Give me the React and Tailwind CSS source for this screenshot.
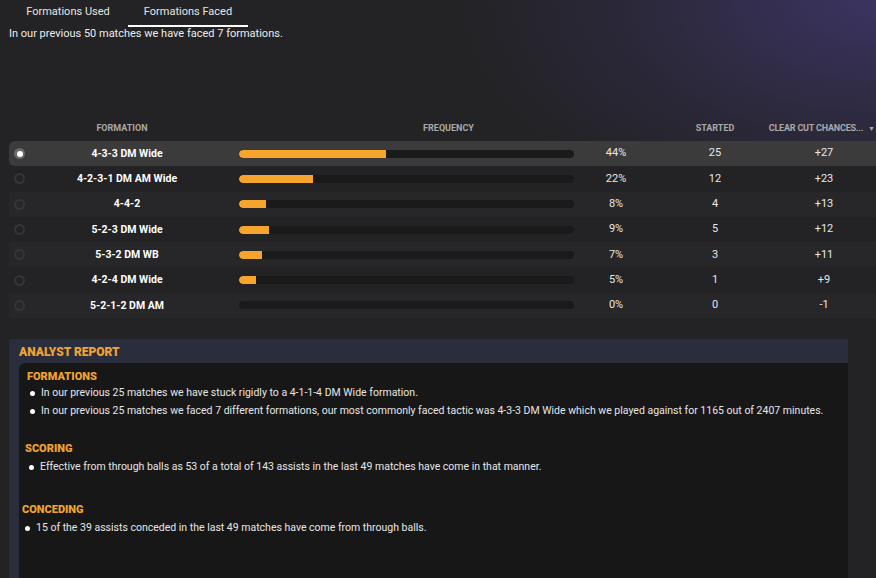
import React from "react";

const rows = [
  { name: "4-3-3 DM Wide", pct: 44, started: 25, ccc: "+27", sel: true },
  { name: "4-2-3-1 DM AM Wide", pct: 22, started: 12, ccc: "+23" },
  { name: "4-4-2", pct: 8, started: 4, ccc: "+13" },
  { name: "5-2-3 DM Wide", pct: 9, started: 5, ccc: "+12" },
  { name: "5-3-2 DM WB", pct: 7, started: 3, ccc: "+11" },
  { name: "4-2-4 DM Wide", pct: 5, started: 1, ccc: "+9" },
  { name: "5-2-1-2 DM AM", pct: 0, started: 0, ccc: "-1" },
];

function Row({ r, i }) {
  const bg = r.sel
    ? "bg-[#3c3b3c] rounded-l-md"
    : i % 2 === 1
    ? "bg-[#232224]"
    : "bg-[#272628]";
  return (
    <div className={`flex items-center h-[25.3px] ${bg}`}>
      <div className="w-[21px] flex justify-center">
        {r.sel ? (
          <div className="w-[11px] h-[11px] rounded-full bg-[#6a6a6a] flex items-center justify-center">
            <div className="w-[6px] h-[6px] rounded-full bg-white" />
          </div>
        ) : (
          <div className="w-[11px] h-[11px] rounded-full border-2 border-[#363537]" />
        )}
      </div>
      <div className="w-[184px] pl-[10px] text-center font-bold text-white text-[10.5px] whitespace-nowrap">{r.name}</div>
      <div className="w-[25px]" />
      <div className="w-[335px] h-[8px] rounded-full bg-[#1b1a1b] overflow-hidden">
        <div
          className="h-full bg-[#f6a52c] rounded-l-full"
          style={{ width: `${r.pct}%` }}
        />
      </div>
      <div className="w-[84px] text-center text-[11px] text-[#e8e8e8]">{r.pct}%</div>
      <div className="w-[114px] text-center text-[11px] text-[#e8e8e8]">{r.started}</div>
      <div className="w-[104px] text-center text-[11px] text-[#e8e8e8]">{r.ccc}</div>
    </div>
  );
}

function Bullet({ children, ml }) {
  return (
    <div className={`flex items-center h-[18px] ${ml}`}>
      <div className="w-[5px] h-[5px] rounded-full bg-white mr-[6px] shrink-0" />
      <span className="text-[10.5px] text-[#e6e6e6] whitespace-nowrap">{children}</span>
    </div>
  );
}

export default function App() {
  return (
    <div
      className="w-[876px] h-[578px] overflow-hidden relative bg-[radial-gradient(ellipse_65%_55%_at_100%_0%,#3b3461_0%,#2a2838_45%,#232224_75%)] text-white"
      style={{ fontFamily: "Roboto, 'Liberation Sans', sans-serif" }}
    >
      {/* Tabs */}
      <div className="flex pl-[8px] h-[27px]">
        <div className="w-[120px] flex items-center justify-center text-[11px] text-[#e6e6e6] h-[25px]">
          Formations Used
        </div>
        <div className="w-[120px] flex flex-col">
          <div className="h-[25px] flex items-center justify-center text-[11px] text-[#e6e6e6]">
            Formations Faced
          </div>
          <div className="h-[2px] bg-white" />
        </div>
      </div>
      <div className="pl-[9px] text-[11px] text-[#ececec] leading-[14px]">
        In our previous 50 matches we have faced 7 formations.
      </div>

      {/* Table */}
      <div className="ml-[9px] mt-[80px]">
        <div className="flex items-center h-[20px] pb-[4px] text-[9px] font-bold text-[#a9a9a9] uppercase whitespace-nowrap">
          <div className="w-[21px]" />
          <div className="w-[184px] text-center">Formation</div>
          <div className="w-[25px]" />
          <div className="w-[419px] text-center">Frequency</div>
          <div className="w-[114px] text-center">Started</div>
          <div className="w-[104px] flex items-center justify-end pr-[1px]">
            <span className="tracking-[-0.2px]">Clear Cut Chances...</span>
            <span className="ml-[5px] text-[7px]">▼</span>
          </div>
        </div>
        {rows.map((r, i) => (
          <Row key={r.name} r={r} i={i} />
        ))}
      </div>

      {/* Analyst report */}
      <div className="ml-[9px] mt-[21px] w-[839px] h-[240px] bg-[#2a2e3c] rounded-tl-sm">
        <div className="pl-[10px] h-[24px] pt-[2px] flex items-center text-[12px] font-black text-[#f0a232]">
          ANALYST REPORT
        </div>
        <div className="ml-[10px] h-[216px] bg-[#171718] rounded-tl-md pt-[7px]">
          <div className="pl-[8px] text-[11px] font-black text-[#f0a232] h-[14px] leading-[14px]">FORMATIONS</div>
          <Bullet ml="ml-[11px]">In our previous 25 matches we have stuck rigidly to a 4-1-1-4 DM Wide formation.</Bullet>
          <Bullet ml="ml-[11px]">
            In our previous 25 matches we faced 7 different formations, our most commonly faced tactic was 4-3-3 DM Wide which we played against for 1165 out of 2407 minutes.
          </Bullet>
          <div className="pl-[6px] mt-[22px] text-[11px] font-black text-[#f0a232] h-[14px] leading-[14px]">SCORING</div>
          <Bullet ml="ml-[10px] mt-[2px]">Effective from through balls as 53 of a total of 143 assists in the last 49 matches have come in that manner.</Bullet>
          <div className="pl-[3px] mt-[27px] text-[11px] font-black text-[#f0a232] h-[14px] leading-[14px]">CONCEDING</div>
          <Bullet ml="ml-[6px] mt-[2px]">15 of the 39 assists conceded in the last 49 matches have come from through balls.</Bullet>
        </div>
      </div>
    </div>
  );
}
